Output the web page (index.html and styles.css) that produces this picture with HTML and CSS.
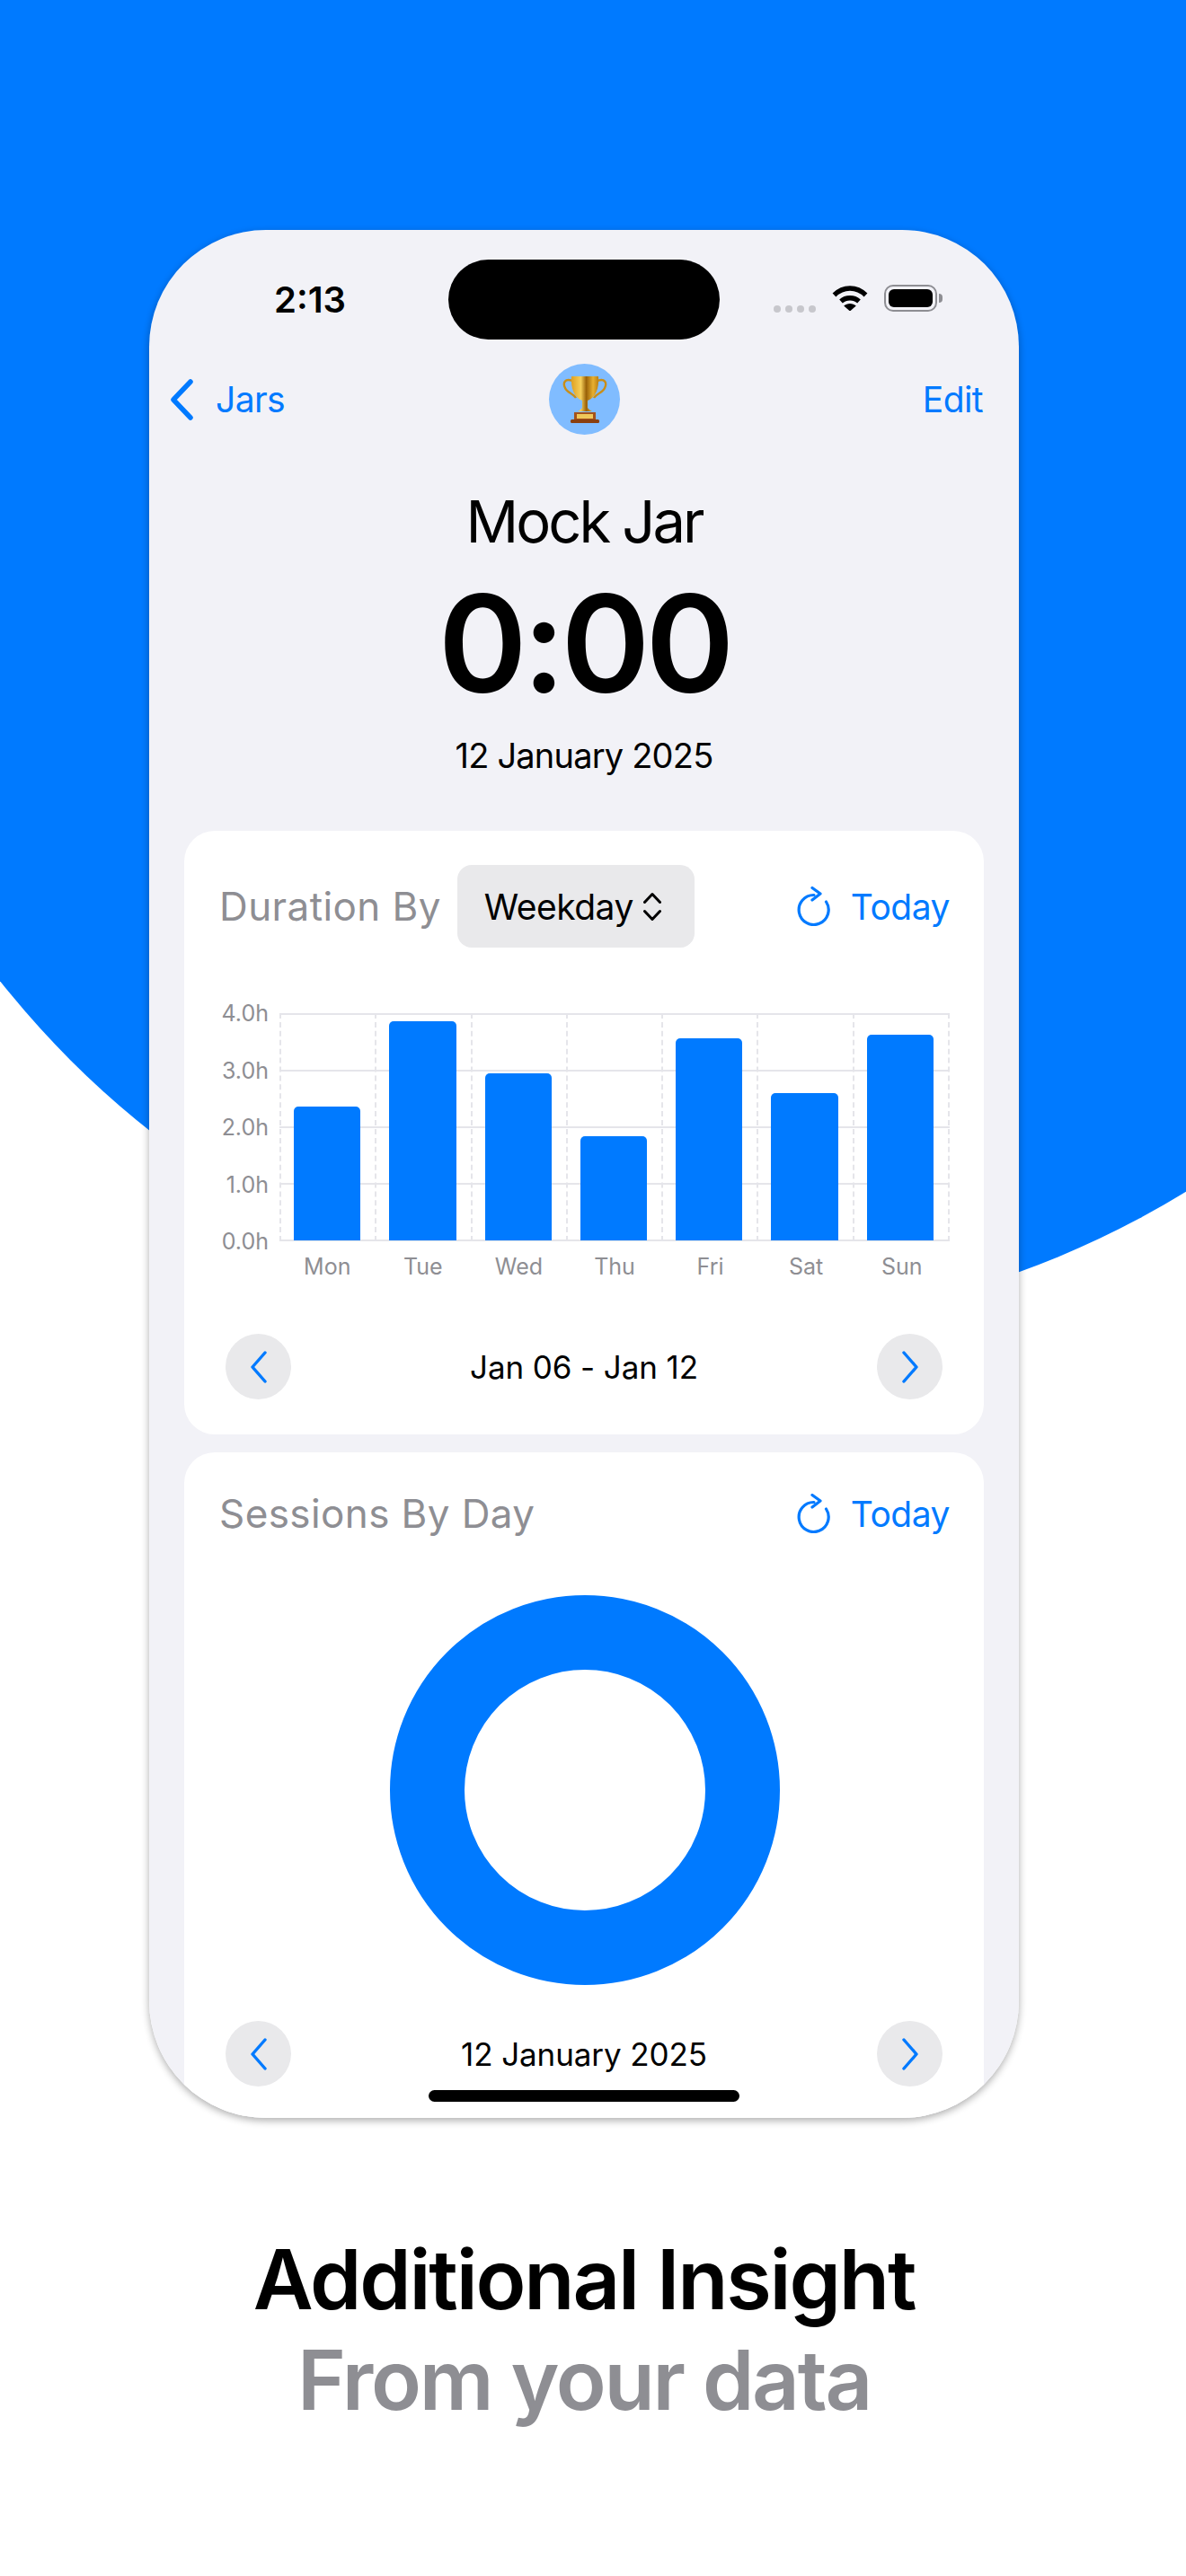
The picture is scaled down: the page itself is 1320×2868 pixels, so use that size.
FILE: index.html
```html
<!DOCTYPE html>
<html lang="en">
<head>
  <meta charset="UTF-8" />
  <title>Additional Insight</title>
  <link rel="stylesheet" href="styles.css">
</head>
<body>
<div class="pagina">
  <div class="circulo"></div>

  <div class="coluna">
    <div class="telefone">
      <div class="status">
        <span class="hora">2:13</span>
        <div class="ilha"></div>
        <div class="status-icones">
          <div class="sinal"><i></i><i></i><i></i><i></i></div>
          <svg class="wifi" viewBox="0 0 40 29">
            <path d="M2.500 11.500C12.500 1.500 27.500 1.500 37.500 11.500" fill="none" stroke="#000" stroke-width="5.400"/>
            <path d="M10 18.500C15.500 13.500 24.500 13.500 30 18.500" fill="none" stroke="#000" stroke-width="5.400"/>
            <path d="M13.200 23.600C17 20 23 20 26.800 23.600L20 29.500Z" fill="#000"/>
          </svg>
          <div class="bateria"><div class="carga"></div></div>
          <div class="pino"></div>
        </div>
      </div>

      <div class="nav">
        <a class="voltar">
          <svg class="chevron-nav" viewBox="0 0 28 46"><path d="M24 3L5 23L24 43" fill="none" stroke="#007aff" stroke-width="5.500" stroke-linecap="round" stroke-linejoin="round"/></svg>
          <span>Jars</span>
        </a>
        <div class="avatar">
          <svg class="trofeu" viewBox="0 0 50 53">
            <defs>
              <linearGradient id="ouro" x1="0" x2="1" y1="0" y2="0">
                <stop offset="0" stop-color="#e0a020"/>
                <stop offset="0.35" stop-color="#f5cf5a"/>
                <stop offset="0.55" stop-color="#9a6208"/>
                <stop offset="0.8" stop-color="#e8b030"/>
                <stop offset="1" stop-color="#b97e12"/>
              </linearGradient>
            </defs>
            <path d="M11 6C3 3 0 8 3 14C5 19 12 20 15 25" fill="none" stroke="#c98e18" stroke-width="2.400"/>
            <path d="M39 6C47 3 50 8 47 14C45 19 38 20 35 25" fill="none" stroke="#c98e18" stroke-width="2.400"/>
            <path d="M10 1H40C41 14 37 25 28 28V36C29 38 32 39 33 40H17C18 39 21 38 22 36V28C13 25 9 14 10 1Z" fill="url(#ouro)"/>
            <rect x="13" y="41" width="24" height="9" fill="#a5521a"/>
            <rect x="16" y="43" width="18" height="5" fill="#efc75a"/>
            <rect x="9" y="49" width="32" height="4" rx="1.500" fill="#8a3f10"/>
          </svg>
        </div>
        <a class="editar">Edit</a>
      </div>

      <div class="cabecalho">
        <div class="nome">Mock Jar</div>
        <div class="tempo">0:00</div>
        <div class="data">12 January 2025</div>
      </div>

      <div class="cartao cartao-duracao">
        <div class="cartao-topo">
          <span class="cartao-titulo">Duration By</span>
          <div class="seletor">
            <span>Weekday</span>
            <svg class="setas" viewBox="0 0 20 33">
              <path d="M1.500 11.500L10 2.500L18.500 11.500M1.500 21.500L10 30.500L18.500 21.500" fill="none" stroke="#000" stroke-width="3" stroke-linecap="round" stroke-linejoin="round"/>
            </svg>
          </div>
          <a class="hoje">
            <svg class="recarregar" viewBox="0 0 38 44">
              <path d="M32.500 17A16.500 16.500 0 1 1 19 9.500" fill="none" stroke="#007aff" stroke-width="3.200" stroke-linecap="round"/>
              <path d="M17 1.500L26 8L17 15" fill="none" stroke="#007aff" stroke-width="3.200" stroke-linecap="round" stroke-linejoin="round"/>
            </svg>
            <span>Today</span>
          </a>
        </div>

        <div class="grafico">
          <div class="eixo-y">
            <span>4.0h</span><span>3.0h</span><span>2.0h</span><span>1.0h</span><span>0.0h</span>
          </div>
          <div class="area">
            <div class="coluna-barra"><div class="barra" style="height: 149px"></div></div>
            <div class="coluna-barra"><div class="barra" style="height: 244px"></div></div>
            <div class="coluna-barra"><div class="barra" style="height: 186px"></div></div>
            <div class="coluna-barra"><div class="barra" style="height: 116px"></div></div>
            <div class="coluna-barra"><div class="barra" style="height: 225px"></div></div>
            <div class="coluna-barra"><div class="barra" style="height: 164px"></div></div>
            <div class="coluna-barra"><div class="barra" style="height: 229px"></div></div>
          </div>
          <div class="eixo-x">
            <span>Mon</span><span>Tue</span><span>Wed</span><span>Thu</span><span>Fri</span><span>Sat</span><span>Sun</span>
          </div>
        </div>

        <div class="paginador">
          <button class="seta"><svg viewBox="0 0 20 36"><path d="M17 2L3 18L17 34" fill="none" stroke="#007aff" stroke-width="3.400" stroke-linecap="round" stroke-linejoin="round"/></svg></button>
          <span>Jan 06 - Jan 12</span>
          <button class="seta"><svg viewBox="0 0 20 36"><path d="M3 2L17 18L3 34" fill="none" stroke="#007aff" stroke-width="3.400" stroke-linecap="round" stroke-linejoin="round"/></svg></button>
        </div>
      </div>

      <div class="cartao cartao-sessoes">
        <div class="cartao-topo topo-simples">
          <span class="cartao-titulo">Sessions By Day</span>
          <a class="hoje">
            <svg class="recarregar" viewBox="0 0 38 44">
              <path d="M32.500 17A16.500 16.500 0 1 1 19 9.500" fill="none" stroke="#007aff" stroke-width="3.200" stroke-linecap="round"/>
              <path d="M17 1.500L26 8L17 15" fill="none" stroke="#007aff" stroke-width="3.200" stroke-linecap="round" stroke-linejoin="round"/>
            </svg>
            <span>Today</span>
          </a>
        </div>
        <div class="rosca"></div>
        <div class="paginador">
          <button class="seta"><svg viewBox="0 0 20 36"><path d="M17 2L3 18L17 34" fill="none" stroke="#007aff" stroke-width="3.400" stroke-linecap="round" stroke-linejoin="round"/></svg></button>
          <span>12 January 2025</span>
          <button class="seta"><svg viewBox="0 0 20 36"><path d="M3 2L17 18L3 34" fill="none" stroke="#007aff" stroke-width="3.400" stroke-linecap="round" stroke-linejoin="round"/></svg></button>
        </div>
      </div>

      <div class="barra-home"></div>
    </div>

    <div class="chamada">
      <div class="chamada-um">Additional Insight</div>
      <div class="chamada-dois">From your data</div>
    </div>
  </div>
</div>
</body>
</html>
```

FILE: styles.css
```css
body {
  margin: 0;
  font-family: Inter, "Liberation Sans", sans-serif;
  color: #000;
  background-color: #fff;
}

.pagina {
  position: relative;
  width: 1320px;
  height: 2868px;
  overflow: hidden;
  background-color: #fff;
}

/* big blue circle behind the phone */
.circulo {
  position: absolute;
  left: -217px;
  top: -542px;
  width: 2018px;
  height: 2018px;
  border-radius: 50%;
  background-color: #007aff;
}

.coluna {
  position: relative;
  width: 968px;
  margin-left: 166px;
  padding-top: 256px;
}

.telefone {
  position: relative;
  height: 2102px;
  border-radius: 130px;
  overflow: hidden;
  background-color: #f2f2f7;
}

.coluna::before {
  content: "";
  position: absolute;
  left: 0;
  right: 0;
  top: 256px;
  height: 2102px;
  border-radius: 130px;
  box-shadow: 0 3px 9px rgba(0, 0, 0, 0.32);
}

/* status bar */
.status {
  display: grid;
  grid-template-columns: 1fr 302px 1fr;
  align-items: center;
  height: 89px;
  padding-top: 33px;
}

.hora {
  justify-self: start;
  margin-left: 139px;
  font-size: 40px;
  font-weight: 600;
}

.ilha {
  height: 89px;
  border-radius: 45px;
  background-color: #000;
}

.status-icones {
  display: flex;
  align-items: center;
  margin-left: 60px;
}

.sinal {
  display: flex;
  gap: 5px;
  margin-top: 20px;
}

.sinal i {
  width: 8px;
  height: 8px;
  border-radius: 50%;
  background-color: #c7c7cc;
}

.wifi {
  width: 40px;
  height: 29px;
  margin-left: 18px;
  margin-top: -4px;
}

.bateria {
  box-sizing: border-box;
  width: 59px;
  height: 30px;
  margin-left: 18px;
  margin-top: -4px;
  padding: 3px;
  border: 2px solid #8e8e93;
  border-radius: 10px;
}

.carga {
  height: 100%;
  border-radius: 6px;
  background-color: #000;
}

.pino {
  width: 4px;
  height: 10px;
  margin-left: 2px;
  margin-top: -4px;
  border-radius: 0 4px 4px 0;
  background-color: #8e8e93;
}

/* nav */
.nav {
  display: flex;
  justify-content: space-between;
  align-items: center;
  position: relative;
  height: 79px;
  margin-top: 27px;
  padding: 0 40px 0 22px;
  font-size: 39px;
  letter-spacing: -0.6px;
  color: #007aff;
}

.voltar {
  display: flex;
  align-items: center;
  gap: 24px;
}

.chevron-nav {
  width: 28px;
  height: 46px;
}

.avatar {
  position: absolute;
  left: 445px;
  top: 0;
  display: flex;
  align-items: center;
  justify-content: center;
  width: 79px;
  height: 79px;
  border-radius: 50%;
  background-color: #80bcff;
}

.trofeu {
  width: 50px;
  height: 53px;
}

/* title block */
.cabecalho {
  text-align: center;
}

.nome {
  margin-top: 57px;
  font-size: 65px;
  line-height: 80px;
  letter-spacing: -3px;
}

.tempo {
  margin-top: 16px;
  font-size: 150px;
  font-weight: 600;
  line-height: 160px;
  letter-spacing: -5px;
}

.data {
  margin-top: 18px;
  font-size: 38px;
  line-height: 52px;
  letter-spacing: -0.8px;
}

/* cards */
.cartao {
  margin: 0 39px;
  padding: 38px 38px 39px 39px;
  border-radius: 34px;
  background-color: #fff;
}

.cartao-duracao {
  margin-top: 58px;
}

.cartao-sessoes {
  height: 800px;
  margin-top: 20px;
}

.cartao-topo {
  display: flex;
  align-items: center;
  height: 92px;
}

.topo-simples {
  height: 60px;
  justify-content: space-between;
}

.cartao-titulo {
  font-size: 44px;
  letter-spacing: 0.4px;
  color: #8e8e93;
}

.seletor {
  display: flex;
  align-items: center;
  gap: 11px;
  box-sizing: border-box;
  width: 264px;
  height: 92px;
  margin-left: 18px;
  padding-left: 30px;
  border-radius: 16px;
  font-size: 39px;
  letter-spacing: -0.5px;
  background-color: #e9e9eb;
}

.setas {
  width: 20px;
  height: 33px;
}

.hoje {
  display: flex;
  align-items: center;
  gap: 22px;
  margin-left: auto;
  font-size: 39px;
  letter-spacing: -0.5px;
  color: #007aff;
}

.recarregar {
  width: 38px;
  height: 44px;
}

/* bar chart */
.grafico {
  display: grid;
  grid-template-columns: 55px 1fr;
  column-gap: 12px;
  margin-top: 73px;
  color: #8e8e93;
  font-size: 25px;
}

.eixo-y {
  display: flex;
  flex-direction: column;
  justify-content: space-between;
  height: 284px;
  margin: -15px 0;
  text-align: right;
  line-height: 30px;
}

.area {
  display: grid;
  grid-template-columns: repeat(7, 1fr);
  height: 254px;
  background-image: repeating-linear-gradient(to bottom, #e5e5ea 0, #e5e5ea 2px, transparent 2px, transparent 63px);
  border-right: 2px dashed #e5e5ea;
}

.coluna-barra {
  display: flex;
  align-items: flex-end;
  box-sizing: border-box;
  padding: 0 16px 1px 14px;
  border-left: 2px dashed #e5e5ea;
}

.barra {
  flex: 1;
  border-radius: 5px 5px 0 0;
  background-color: #007aff;
}

.eixo-x {
  grid-column: 2;
  display: grid;
  grid-template-columns: repeat(7, 1fr);
  margin-top: 13px;
  text-align: center;
  line-height: 30px;
}

/* pager */
.paginador {
  display: flex;
  justify-content: space-between;
  align-items: center;
  margin: 0 8px 0 7px;
  font-size: 35px;
  letter-spacing: -0.1px;
}

.cartao-duracao .paginador {
  margin-top: 60px;
}

.seta {
  display: flex;
  align-items: center;
  justify-content: center;
  width: 73px;
  height: 73px;
  padding: 0;
  border: none;
  border-radius: 50%;
  background-color: #e9e9eb;
}

.seta svg {
  width: 20px;
  height: 36px;
}

.rosca {
  box-sizing: border-box;
  width: 434px;
  height: 434px;
  margin: 61px auto 40px;
  border: 83px solid #007aff;
  border-radius: 50%;
}

.barra-home {
  position: absolute;
  left: 311px;
  bottom: 18px;
  width: 346px;
  height: 13px;
  border-radius: 7px;
  background-color: #000;
}

/* text under the phone */
.chamada {
  margin-top: 124px;
  text-align: center;
  font-size: 92px;
  font-weight: 600;
  line-height: 112px;
  letter-spacing: -2.2px;
}

.chamada-dois {
  color: #8e8e93;
}
```
